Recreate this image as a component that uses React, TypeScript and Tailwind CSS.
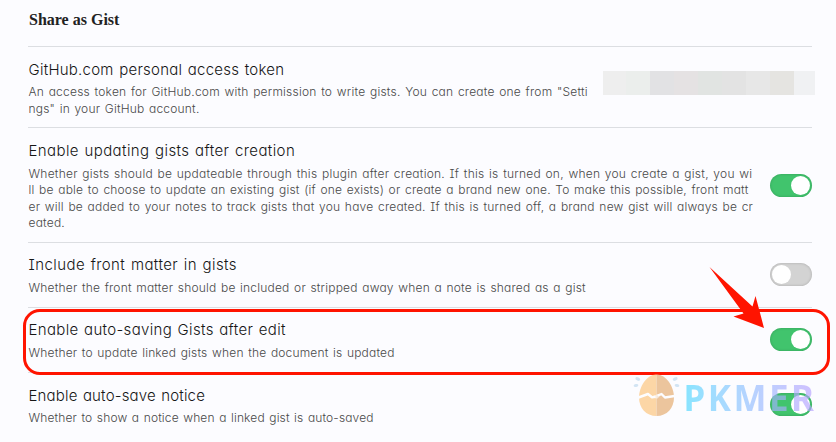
import { useState } from "react";

type Line = { text: string; className: string };

type Setting = {
  name: string;
  nameClass: string;
  desc: Line[];
  on?: boolean;
};

const settings: Setting[] = [
  {
    name: "Enable updating gists after creation",
    nameClass: "tracking-[0.4px]",
    desc: [
      { text: "Whether gists should be updateable through this plugin after creation. If this is turned on, when you create a gist, you wi", className: "tracking-[0.24px]" },
      { text: "ll be able to choose to update an existing gist (if one exists) or create a brand new one. To make this possible, front matt", className: "tracking-[0.2px]" },
      { text: "er will be added to your notes to track gists that you have created. If this is turned off, a brand new gist will always be cr", className: "tracking-[0.21px]" },
      { text: "eated.", className: "tracking-[0.2px]" },
    ],
    on: true,
  },
  {
    name: "Include front matter in gists",
    nameClass: "tracking-[0.42px]",
    desc: [{ text: "Whether the front matter should be included or stripped away when a note is shared as a gist", className: "tracking-[0.195px]" }],
    on: false,
  },
  {
    name: "Enable auto-saving Gists after edit",
    nameClass: "tracking-[0.33px]",
    desc: [{ text: "Whether to update linked gists when the document is updated", className: "tracking-[0.18px]" }],
    on: true,
  },
  {
    name: "Enable auto-save notice",
    nameClass: "tracking-[0.17px]",
    desc: [{ text: "Whether to show a notice when a linked gist is auto-saved", className: "tracking-[0.135px]" }],
    on: true,
  },
];

const tokenDesc: Line[] = [
  { text: 'An access token for GitHub.com with permission to write gists. You can create one from "Setti', className: "tracking-[0.22px]" },
  { text: 'ngs" in your GitHub account.', className: "tracking-[0.2px]" },
];

function Info({ name, nameClass, desc }: { name: string; nameClass: string; desc: Line[] }) {
  return (
    <div className="min-w-0 flex-1 whitespace-nowrap pb-[10.4px] pl-[0.5px] pt-[12.7px] [word-spacing:1px]">
      <div className="h-5 text-[15px] leading-5 text-[#161616]">
        <span className={nameClass}>{name}</span>
      </div>
      <div className="pt-[4.8px] text-[12px] leading-[16.3px] text-[#484848]">
        {desc.map((line) => (
          <div key={line.text}>
            <span className={line.className}>{line.text}</span>
          </div>
        ))}
      </div>
    </div>
  );
}

function Toggle({ initial }: { initial: boolean }) {
  const [on, setOn] = useState(initial);
  return (
    <button
      role="switch"
      aria-checked={on}
      onClick={() => setOn(!on)}
      className={`flex h-[23px] w-[42px] shrink-0 items-center rounded-full px-0.5 shadow-[inset_0_0_3px_rgba(0,0,0,0.2)] ${
        on ? "justify-end bg-[#41c46d]" : "justify-start bg-[#d3d3d3]"
      }`}
    >
      <span className="size-[19px] rounded-full bg-white" />
    </button>
  );
}

/* Redacted token value */
function MaskedToken() {
  return (
    <div className="-mr-[3px] mb-[9px] flex h-6 w-[212px] shrink-0">
      <span className="w-[23px] bg-[#eeeeee]" />
      <span className="w-6 bg-[#ebeeec]" />
      <span className="w-6 bg-[#e2e2e4]" />
      <span className="w-6 bg-[#e5e2e3]" />
      <span className="w-6 bg-[#e1e4e2]" />
      <span className="w-6 bg-[#e3e3e3]" />
      <span className="w-6 bg-[#e7e7e7]" />
      <span className="w-6 bg-[#e5e4e1]" />
      <span className="w-[21px] bg-[#f0f1f3]" />
    </div>
  );
}

function Watermark() {
  return (
    <div className="pointer-events-none absolute left-[634px] top-[373px] flex">
      <svg className="h-11 w-[49.5px] overflow-visible" viewBox="0 0 49.5 44">
        <path d="M22.500 1.500C12.500 1.500 5 14 5 24.500S12 43 22.500 43z" fill="#fcd6a6" />
        <path d="M22.500 1.500C32.500 1.500 40 14 40 24.500S33 43 22.500 43z" fill="#ecc59d" />
        <path d="M4.500 24.500L14 21l4 3.300 3.500-.8M23.500 22.500l4-1.500 3.500 3.500L40.500 23" fill="none" stroke="#fdfdff" strokeWidth="2.400" strokeLinejoin="round" />
        <path d="M22.500 21.500l-5 3.500 6 .5 4-4z" fill="#fdfdff" opacity="0.600" />
        <g fill="#d2e4f3">
          <ellipse cx="3.800" cy="6" rx="2.600" ry="1.600" transform="rotate(25 3.800 6)" />
          <ellipse cx="2" cy="12.500" rx="2.400" ry="1.500" transform="rotate(-12 2 12.500)" />
          <ellipse cx="41.200" cy="6" rx="2.600" ry="1.600" transform="rotate(-25 41.200 6)" />
          <ellipse cx="43" cy="12.500" rx="2.400" ry="1.500" transform="rotate(12 43 12.500)" />
        </g>
      </svg>
      <span className="mt-[2.5px] bg-gradient-to-r from-[#48d8ff] to-[#b9a0ff] bg-clip-text font-['Noto_Sans',sans-serif] text-[35px] font-bold leading-[44px] tracking-[2.500px] text-transparent opacity-65">
        PKMER
      </span>
    </div>
  );
}

export default function App() {
  return (
    <div className="relative h-[442px] w-[836px] overflow-hidden bg-[#fcfcff] pl-7 pr-6 font-['Inter',sans-serif] font-light [font-feature-settings:'cv11','cv08']">
      <h2 className="h-[46px] pl-px pt-2.5 font-['Liberation_Serif',serif] text-[16px] font-bold leading-5 text-[#222222]">
        Share as Gist
      </h2>

      <div className="flex items-center border-t border-[#dcdee2]">
        <Info name="GitHub.com personal access token" nameClass="tracking-[0.25px]" desc={tokenDesc} />
        <MaskedToken />
      </div>

      {settings.map((s) => (
        <div key={s.name} className="flex items-center border-t border-[#dcdee2]">
          <Info name={s.name} nameClass={s.nameClass} desc={s.desc} />
          <Toggle initial={!!s.on} />
        </div>
      ))}

      <div className="pointer-events-none absolute left-[22.5px] top-[309px] h-[65.5px] w-[807.500px] rounded-[17px] border-3 border-[#ff1400]" />
      <svg className="pointer-events-none absolute left-[705px] top-[260px] h-[75px] w-[65px]" viewBox="0 0 65 75">
        <path d="M4.500 7L47.500 46.500 50.500 36 54.500 51 59 68 28.500 56.500 38.500 53.500z" fill="#ff1400" />
      </svg>
      <Watermark />
    </div>
  );
}
